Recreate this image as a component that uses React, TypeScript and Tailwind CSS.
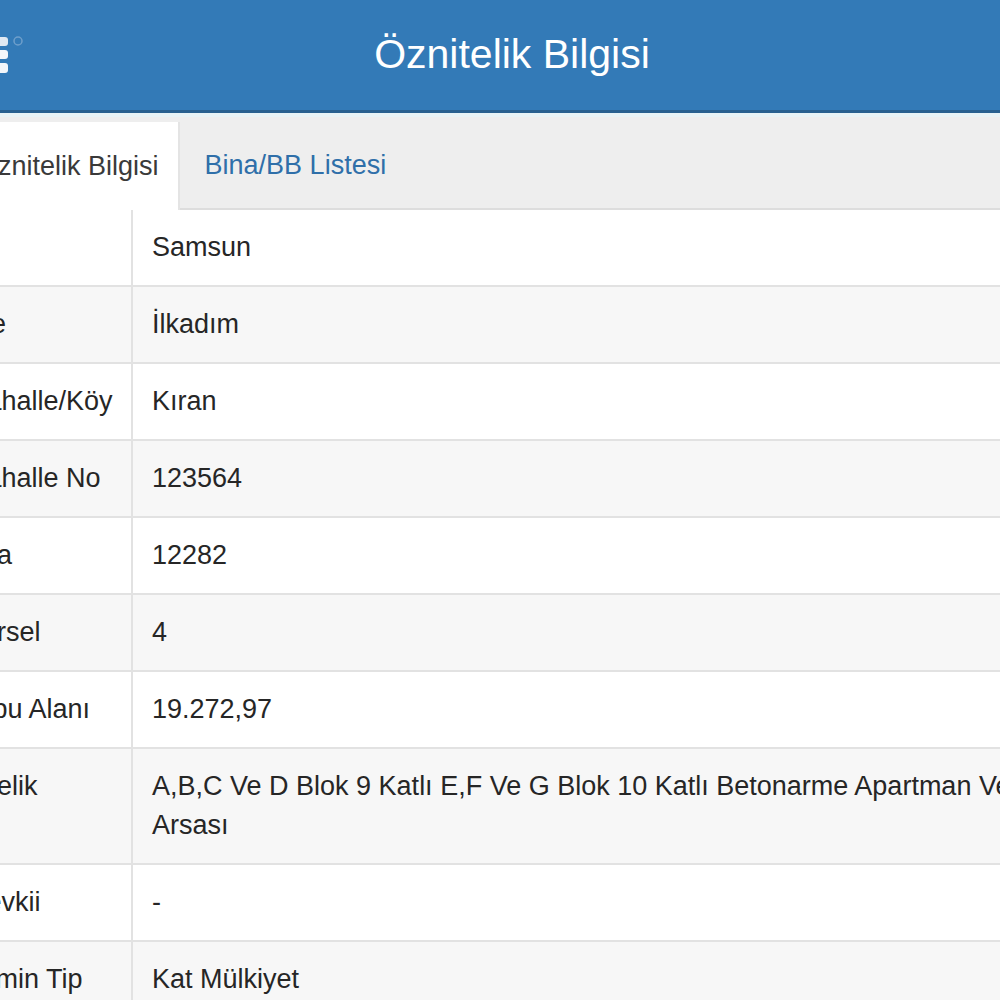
const rows: { label: string; value: string }[] = [
  { label: 'İl', value: 'Samsun' },
  { label: 'İlçe', value: 'İlkadım' },
  { label: 'Mahalle/Köy', value: 'Kıran' },
  { label: 'Mahalle No', value: '123564' },
  { label: 'Ada', value: '12282' },
  { label: 'Parsel', value: '4' },
  { label: 'Tapu Alanı', value: '19.272,97' },
  {
    label: 'Nitelik',
    value: 'A,B,C Ve D Blok 9 Katlı E,F Ve G Blok 10 Katlı Betonarme Apartman Ve Arsası',
  },
  { label: 'Mevkii', value: '-' },
  { label: 'Zemin Tip', value: 'Kat Mülkiyet' },
]

function MenuIcon() {
  return (
    <svg width="34" height="44" viewBox="0 0 34 44" className="absolute left-[45px] top-[34px]">
      <rect x="0" y="3" width="18" height="9" rx="3" fill="#dfe8f2" />
      <rect x="0" y="16" width="18" height="9" rx="3" fill="#f3f6fa" />
      <rect x="0" y="29" width="18" height="10" rx="3" fill="#f3f6fa" />
      <circle cx="28" cy="7" r="4" fill="none" stroke="#6f9fcb" strokeWidth="1.5" />
    </svg>
  )
}

export default function App() {
  return (
    <div
      className="w-[1000px] h-[1000px] overflow-hidden bg-white"
      style={{ fontFamily: '"Liberation Sans", Arial, sans-serif' }}
    >
      <div className="w-[1134px] ml-[-55px]">
        {/* Header */}
        <div className="relative h-[113px] bg-[#337ab7] border-b-[3px] border-[#28608f] flex items-center justify-center">
          <MenuIcon />
          <h1 className="text-[41px] leading-none text-white pb-[2px]">Öznitelik Bilgisi</h1>
        </div>

        {/* Tabs */}
        <div className="border-t-4 border-[#e8f3f6] bg-[#eeeeee]">
          <div className="flex items-end pt-[5px] pl-[11px] border-b-2 border-[#dddddd]">
            <div className="bg-white border-x-2 border-[#e4e4e4] -mb-[2px] h-[88px] px-[19px] flex items-center text-[27px] text-[#3a3a3a]">
              Öznitelik Bilgisi
            </div>
            <div className="h-[86px] pl-[25px] pr-[19px] flex items-center text-[27px] text-[#2f6fa9]">
              Bina/BB Listesi
            </div>
          </div>
        </div>

        {/* Table */}
        <div className="text-[27px] leading-[39px] text-[#262626]">
          {rows.map((row, i) => (
            <div
              key={row.label}
              className={`grid grid-cols-[188px_1fr] border-b-2 border-[#e2e2e2] ${
                i % 2 === 1 ? 'bg-[#f7f7f7]' : 'bg-white'
              }`}
            >
              <div className="pl-[19px] pr-[10px] py-[18px] border-r-2 border-[#e2e2e2] whitespace-nowrap">
                {row.label}
              </div>
              <div className="pl-[19px] pr-[19px] py-[18px]">{row.value}</div>
            </div>
          ))}
        </div>
      </div>
    </div>
  )
}
